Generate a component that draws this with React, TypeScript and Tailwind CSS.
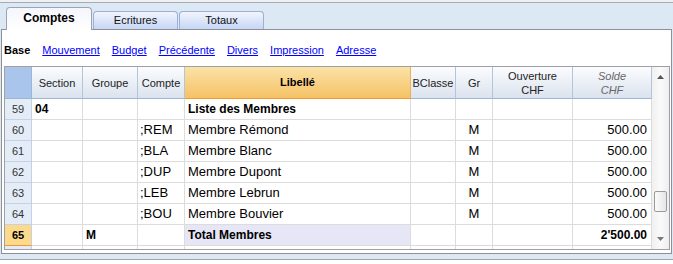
const cols =
  "grid grid-cols-[27px_51px_55px_47px_226px_45px_37px_80px_79px]";

type Row = {
  n: number;
  section?: string;
  groupe?: string;
  compte?: string;
  libelle: string;
  gr?: string;
  solde?: string;
  title?: boolean;
  total?: boolean;
};

const rows: Row[] = [
  { n: 59, section: "04", libelle: "Liste des Membres", title: true },
  { n: 60, compte: ";REM", libelle: "Membre Rémond", gr: "M", solde: "500.00" },
  { n: 61, compte: ";BLA", libelle: "Membre Blanc", gr: "M", solde: "500.00" },
  { n: 62, compte: ";DUP", libelle: "Membre Dupont", gr: "M", solde: "500.00" },
  { n: 63, compte: ";LEB", libelle: "Membre Lebrun", gr: "M", solde: "500.00" },
  { n: 64, compte: ";BOU", libelle: "Membre Bouvier", gr: "M", solde: "500.00" },
  { n: 65, groupe: "M", libelle: "Total Membres", solde: "2'500.00", total: true },
];

const links = ["Mouvement", "Budget", "Précédente", "Divers", "Impression", "Adresse"];

function Tab({ label, active }: { label: string; active?: boolean }) {
  if (active) {
    return (
      <div className="relative z-10 -mb-px flex h-[23px] w-[86px] items-center justify-center rounded-t-[4px] border border-b-0 border-[#9aa4b4] bg-gradient-to-b from-[#f4f6fc] to-white pb-[2px] text-[12px] font-bold text-black">
        {label}
      </div>
    );
  }
  return (
    <div className="flex h-[18px] w-[85px] items-center justify-center rounded-t-[4px] border border-b-0 border-[#9cb0d4] bg-gradient-to-b from-[#f2f5fd] to-[#c6d6f6] text-[11px] text-[#111]">
      {label}
    </div>
  );
}

function HeadCell({ children, className = "" }: { children?: React.ReactNode; className?: string }) {
  return (
    <div
      className={
        "flex flex-col items-center justify-center border-r border-b border-r-[#b4c4da] border-b-[#9db6d6] bg-gradient-to-b from-[#fbfcfe] to-[#dbe3ee] text-[11px] leading-[14px] text-[#222] " +
        className
      }
    >
      {children}
    </div>
  );
}

function Cell({ children, className = "" }: { children?: React.ReactNode; className?: string }) {
  return (
    <div className={"flex h-[21px] items-center border-r border-b border-[#dcdcdc] " + className}>
      {children}
    </div>
  );
}

export default function App() {
  return (
    <div className="h-[264px] w-[673px] overflow-hidden bg-[#dde8f5] font-['Liberation_Sans',Arial,sans-serif]">
      <div className="h-[2px] bg-[#eef0f2]" />
      <div className="h-px bg-[#a6abb4]" />

      <div className="flex h-[26px] items-end gap-px pl-[6px]">
        <Tab label="Comptes" active />
        <Tab label="Ecritures" />
        <Tab label="Totaux" />
      </div>

      <div className="ml-px h-[225px] w-[671px] border border-[#8e9096] bg-white">
        <div className="flex h-[36px] gap-[12px] pl-[2px] pt-[14px] text-[11px] leading-[13px]">
          <span className="font-bold text-black">Base</span>
          {links.map((l) => (
            <span key={l} className="text-[#0000ff] underline">
              {l}
            </span>
          ))}
        </div>

        <div className="ml-[2px] flex h-[184px] w-[666px] border border-[#a0a0a4]">
          <div className="w-[647px]">
            <div className={cols + " h-[32px]"}>
              <div className="border-r border-b border-[#9db6d6] bg-[#aac5ec]" />
              <HeadCell>Section</HeadCell>
              <HeadCell>Groupe</HeadCell>
              <HeadCell>Compte</HeadCell>
              <div className="flex items-center justify-center border-r border-b border-r-[#e8b060] border-b-[#f29a2c] bg-gradient-to-b from-[#fbe2a6] to-[#f5c264] text-[11px] font-bold text-black">
                Libellé
              </div>
              <HeadCell>BClasse</HeadCell>
              <HeadCell>Gr</HeadCell>
              <HeadCell>
                <span>Ouverture</span>
                <span>CHF</span>
              </HeadCell>
              <HeadCell className="italic text-[#666]">
                <span>Solde</span>
                <span>CHF</span>
              </HeadCell>
            </div>

            {rows.map((r) => (
              <div key={r.n} className={cols + " text-[13px] text-black"}>
                <div
                  className={
                    "flex h-[21px] items-center justify-center border-r border-b border-r-[#c4d2e4] text-[11px] " +
                    (r.total
                      ? "border-b-[#ee9a36] bg-[#fdd98c] font-bold text-black"
                      : "border-b-[#c4d2e4] bg-[#e3ecf7] text-[#333]")
                  }
                >
                  {r.n}
                </div>
                <Cell className="pl-[3px] text-[12px] font-bold">{r.section}</Cell>
                <Cell className="pl-[3px] text-[12px] font-bold">{r.groupe}</Cell>
                <Cell className="pl-[2px]">{r.compte}</Cell>
                <Cell
                  className={
                    "pl-[3px] " +
                    (r.title || r.total ? "text-[12px] font-bold " : "") +
                    (r.total ? "bg-[#e6e6f6]" : "")
                  }
                >
                  {r.libelle}
                </Cell>
                <Cell />
                <Cell className="justify-center">{r.gr}</Cell>
                <Cell />
                <Cell className={"justify-end pr-[4px] " + (r.total ? "text-[12px] font-bold" : "")}>
                  {r.solde}
                </Cell>
              </div>
            ))}

            <div className={cols + " h-[3px]"}>
              <div className="border-r border-[#c4d2e4] bg-[#e3ecf7]" />
              <div className="border-r border-[#dcdcdc]" />
              <div className="border-r border-[#dcdcdc]" />
              <div className="border-r border-[#dcdcdc]" />
              <div className="border-r border-[#dcdcdc]" />
              <div className="border-r border-[#dcdcdc]" />
              <div className="border-r border-[#dcdcdc]" />
              <div className="border-r border-[#dcdcdc]" />
              <div className="border-r border-[#dcdcdc]" />
            </div>
          </div>

          <div className="flex w-[17px] flex-col items-center bg-gradient-to-r from-[#f0f0f0] via-[#fafafa] to-[#eeeeee]">
            <svg width="7" height="4" viewBox="0 0 7 4" className="mt-[8px]">
              <path d="M0 4 L3.5 0 L7 4 Z" fill="#555" />
            </svg>
            <div className="mt-[112px] h-[21px] w-[13px] rounded-[2px] border border-[#9a9a9a] bg-gradient-to-r from-[#fbfbfb] to-[#e6e6e6]" />
            <svg width="7" height="4" viewBox="0 0 7 4" className="mt-[25px]">
              <path d="M0 0 L7 0 L3.5 4 Z" fill="#777" />
            </svg>
          </div>
        </div>
      </div>

      <div className="mt-[5px] h-[10px] border-t border-[#a0a4ac] bg-white" />
    </div>
  );
}
